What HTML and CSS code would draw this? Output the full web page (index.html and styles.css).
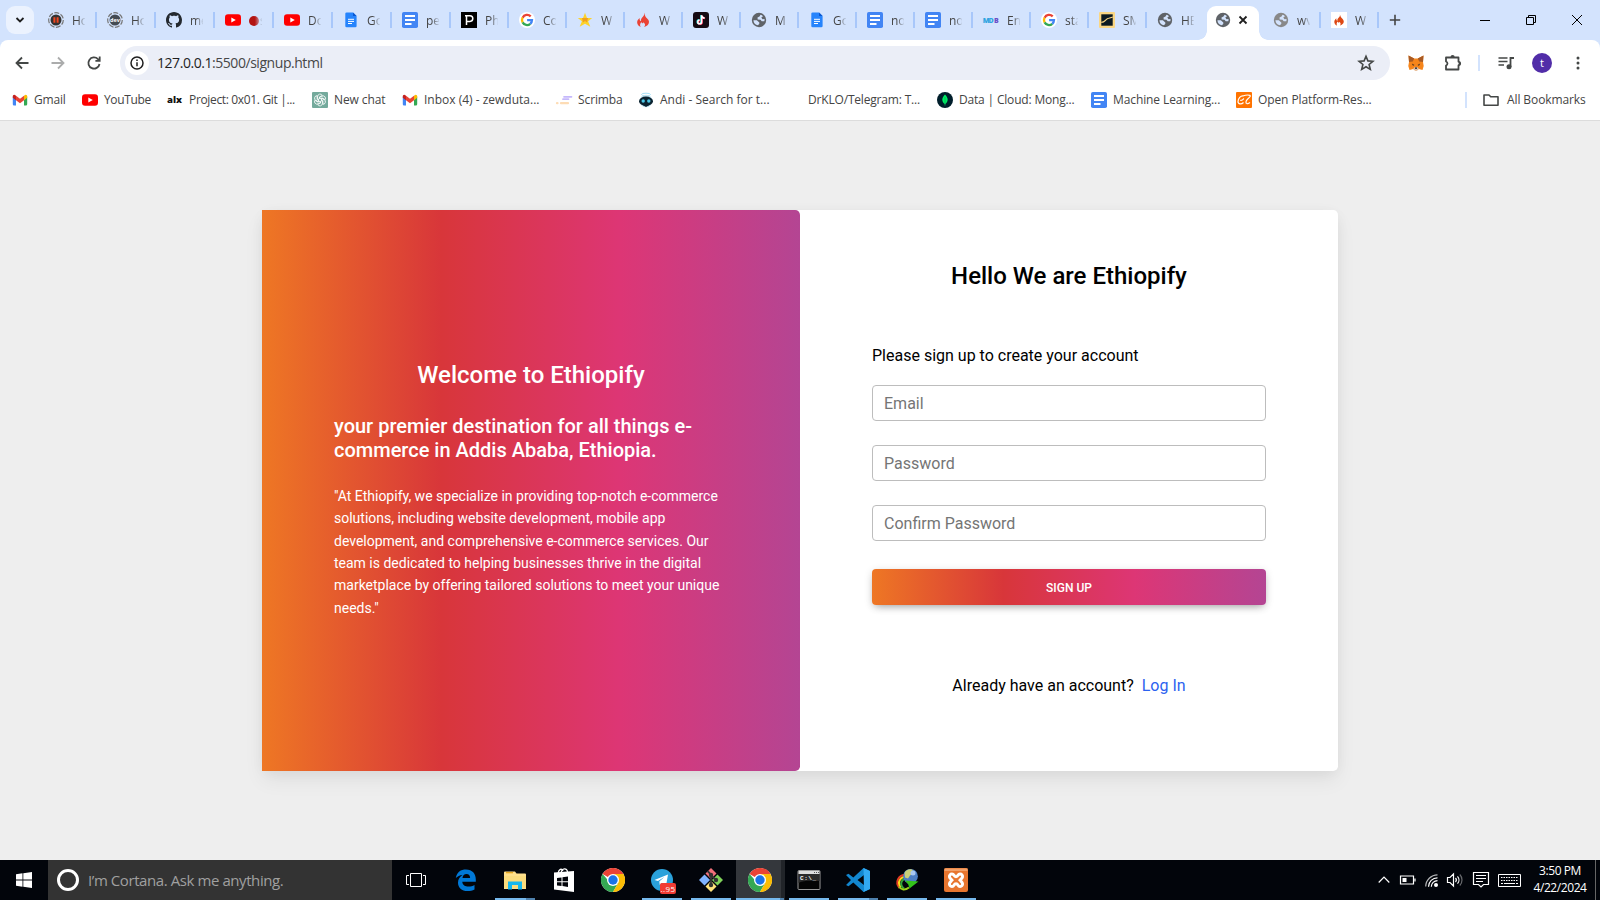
FILE: index.html
```html
<!DOCTYPE html>
<html lang="en">
<head>
<meta charset="utf-8">
<title>Sign up - Ethiopify</title>
<link rel="stylesheet" href="styles.css">
</head>
<body>
<svg class="defs" aria-hidden="true">
  <symbol id="i-youtube" viewBox="0 0 16 16"><rect y="2.2" width="16" height="11.6" rx="3" fill="#f00"/><path d="M6.3 5.4v5.2L10.8 8z" fill="#fff"/></symbol>
  <symbol id="i-docs" viewBox="0 0 16 16"><rect width="16" height="16" rx="1.8" fill="#4285f4"/><path d="M3 4h10M3 8h10M3 12h6.5" stroke="#fff" stroke-width="1.8"/></symbol>
  <symbol id="i-gdoc" viewBox="0 0 16 16"><path d="M3.6.5H10L13.6 4v10a1.3 1.3 0 0 1-1.3 1.3H3.6A1.3 1.3 0 0 1 2.3 14V1.8A1.3 1.3 0 0 1 3.6.5z" fill="#2684fc"/><path d="M10 .5 13.6 4H10z" fill="#0b57d0"/><path d="M5 7.3h6M5 9.4h6M5 11.5h4" stroke="#fff" stroke-width="1"/></symbol>
  <symbol id="i-google" viewBox="0 0 16 16"><circle cx="8" cy="8" r="8" fill="#fff"/><g fill="none" stroke-width="2.3"><path d="M11.7 4.4A5 5 0 0 0 3.6 5.7" stroke="#ea4335"/><path d="M3.6 5.6a5 5 0 0 0 0 4.8" stroke="#fbbc05"/><path d="M3.6 10.4a5 5 0 0 0 7.7 1.4" stroke="#34a853"/><path d="M11.3 11.8A5 5 0 0 0 13 8.1H8.1" stroke="#4285f4"/></g></symbol>
  <symbol id="i-globe" viewBox="0 0 16 16"><circle cx="8" cy="8" r="7.2" fill="currentColor"/><path d="M2.400 8.200H5.800L8.300 10.400V11.800L7 13.200A5.600 5.600 0 0 1 2.400 8.200zM9.500 2.700 8.500 4.500 6.500 5.500 6.700 7.500 9.500 7.700 10.700 9.300 13.300 9.300A5.500 5.500 0 0 0 13.500 7L11.500 7.300 10.300 5.500 12 4.300A5.500 5.500 0 0 0 9.500 2.700z" fill="#d3e3fd"/></symbol>
  <symbol id="i-flame" viewBox="0 0 16 16"><path d="M9 .8c.8 2.300-.6 3.200-1.800 4.800C6 7 5.700 8 6.100 9.200 4.600 8.600 4.500 7.300 4.700 5.900 2.800 7.400 1.900 9 2.200 11c.3 1.900 1.700 3.300 3.500 4C4.500 13.200 5.200 11.300 6.500 10 6.700 11.500 8.300 12 8.400 10.300c2 1.400 2.200 3.300.7 4.700 2.600-.8 4.900-2.500 4.900-5 0-2.800-2.600-3.700-3.700-5.800-.5-1-.6-2.300-1.300-3.400z"/></symbol>
  <symbol id="i-gmail" viewBox="0 0 16 16"><path d="M.8 4.500 4 6.800V13.500H2a1.200 1.200 0 0 1-1.200-1.200z" fill="#4285f4"/><path d="M15.200 4.500 12 6.800V13.500h2a1.200 1.200 0 0 0 1.200-1.200z" fill="#34a853"/><path d="M12 3.800 13 3a1.400 1.400 0 0 1 2.200 1.200V5.800L12 8.200z" fill="#fbbc04"/><path d="M4 3.800 8 6.800 12 3.800V8.200L8 11.200 4 8.200z" fill="#ea4335"/><path d="M4 3.800 3 3A1.400 1.400 0 0 0 .8 4.200V5.800L4 8.200z" fill="#c5221f"/></symbol>
  <symbol id="i-chrome" viewBox="0 0 24 24"><circle cx="12" cy="12" r="12" fill="#fff"/><path d="M12 12 1.600 6A12 12 0 0 1 22.400 6z" fill="#ea4335"/><path d="M1.600 6A12 12 0 0 0 12 24L17.200 15 12 12H6.800z" fill="#34a853"/><path d="M22.400 6A12 12 0 0 1 12 24L17.200 15 17.200 9 12 6z" fill="#fbbc04"/><circle cx="12" cy="12" r="6" fill="#fff"/><circle cx="12" cy="12" r="4.700" fill="#1a73e8"/></symbol>
</svg>

<div class="tabstrip">
  <div class="search-tabs"><svg width="10" height="10" viewBox="0 0 10 10"><path d="M1.500 3 5 6.500 8.500 3" class="ln2"/></svg></div>
  <div class="tabs">
    <div class="tab w59"><svg class="fav" viewBox="0 0 16 16"><circle cx="8" cy="8" r="7.300" fill="none" stroke="#777" stroke-width="1.200" stroke-dasharray="5 1.500"/><circle cx="8" cy="8" r="5.500" fill="#333"/><path d="M5.400 5.200h2v5.600h-2zM8.600 5.200h2v5.600h-2z" fill="#f0461f"/></svg><span>Ho</span></div>
    <div class="tab w59"><svg class="fav" viewBox="0 0 16 16"><circle cx="8" cy="8" r="7.300" fill="none" stroke="#777" stroke-width="1.200" stroke-dasharray="5 1.500"/><circle cx="8" cy="8" r="5.500" fill="#444b52"/><text x="8" y="10" font-size="5.500" text-anchor="middle" class="favtext">dev</text></svg><span>Ho</span></div>
    <div class="tab w59"><svg class="fav" viewBox="0 0 16 16"><path fill="#24292f" d="M8 0C3.580 0 0 3.580 0 8c0 3.540 2.290 6.530 5.470 7.590.4.070.55-.17.55-.38 0-.19-.010-.82-.010-1.490-2.010.37-2.530-.49-2.690-.94-.09-.23-.48-.94-.82-1.130-.28-.15-.68-.52-.010-.53.63-.010 1.080.58 1.230.82.72 1.210 1.870.87 2.330.66.070-.52.28-.87.51-1.070-1.780-.2-3.640-.89-3.640-3.950 0-.87.31-1.590.82-2.150-.08-.2-.36-1.020.08-2.120 0 0 .67-.21 2.200.82.64-.18 1.320-.27 2-.27s1.360.09 2 .27c1.530-1.040 2.200-.82 2.200-.82.44 1.100.16 1.920.08 2.120.51.56.82 1.270.82 2.150 0 3.070-1.870 3.750-3.650 3.950.29.25.54.73.54 1.480 0 1.070-.010 1.930-.010 2.200 0 .21.15.46.55.38A8.010 8.010 0 0 0 16 8c0-4.420-3.580-8-8-8z"/></svg><span>me</span></div>
    <div class="tab w59"><svg class="fav"><use href="#i-youtube"/></svg><span><i class="live"></i>s</span></div>
    <div class="tab w59"><svg class="fav"><use href="#i-youtube"/></svg><span>Do</span></div>
    <div class="tab w59"><svg class="fav"><use href="#i-gdoc"/></svg><span>Go</span></div>
    <div class="tab w59"><svg class="fav"><use href="#i-docs"/></svg><span>pe</span></div>
    <div class="tab"><svg class="fav" viewBox="0 0 16 16"><rect width="16" height="16"/><path d="M5.500 13V3.800M4 3.800h2M6 3.800h3a2.800 2.800 0 0 1 0 5.600H6" fill="none" stroke="#fff" stroke-width="1.500"/></svg><span>Ph</span></div>
    <div class="tab"><svg class="fav"><use href="#i-google"/></svg><span>Co</span></div>
    <div class="tab"><svg class="fav" viewBox="0 0 16 16"><path d="M8 .8 10 6h5.200l-4.100 3.300 2.200 5.500L8 11.700l-5.300 3.100 2.200-5.500L.8 6H6z" fill="#fdd32b"/><path d="M5 6h6l-1 4.500-2-1.500-2 1.500z" fill="#f0a020"/></svg><span>W</span></div>
    <div class="tab"><svg class="fav red"><use href="#i-flame"/></svg><span>W</span></div>
    <div class="tab"><svg class="fav" viewBox="0 0 16 16"><rect width="16" height="16" rx="3" fill="#150a12"/><path d="M8.100 3v6.700a1.900 1.900 0 1 1-1.900-1.900M8.100 3.300c.3 1.500 1.400 2.500 3 2.600" fill="none" stroke="#25f4ee" stroke-width="1.700"/><path d="M9.100 3.500v6.700a1.900 1.900 0 1 1-1.900-1.900M9.100 3.800c.3 1.500 1.400 2.500 3 2.600" fill="none" stroke="#fe2c55" stroke-width="1.700"/><path d="M8.600 3.200v6.700a1.900 1.900 0 1 1-1.900-1.900M8.600 3.500c.3 1.500 1.400 2.500 3 2.600" fill="none" stroke="#fff" stroke-width="1.500"/></svg><span>W</span></div>
    <div class="tab"><svg class="fav"><use href="#i-globe"/></svg><span>M</span></div>
    <div class="tab"><svg class="fav"><use href="#i-gdoc"/></svg><span>Go</span></div>
    <div class="tab"><svg class="fav"><use href="#i-docs"/></svg><span>no</span></div>
    <div class="tab"><svg class="fav"><use href="#i-docs"/></svg><span>no</span></div>
    <div class="tab"><svg class="fav" viewBox="0 0 16 16"><text x="-.3" y="10.500" class="mdb" textLength="11">MD</text><text x="11" y="10.500" class="mdb violet">B</text></svg><span>En</span></div>
    <div class="tab"><svg class="fav"><use href="#i-google"/></svg><span>sta</span></div>
    <div class="tab"><svg class="fav" viewBox="0 0 16 16"><rect width="16" height="16" rx="1" fill="#fbd784"/><rect x="2.300" y="2.300" width="11.400" height="11.400" fill="#0c1a22"/><path d="M2.300 10.400c3.600 0 3.800-2.400 6-3.600C10 5.800 11.500 6.200 13.700 5" fill="none" stroke="#fbd784" stroke-width="1.200"/></svg><span>SM</span></div>
    <div class="tab last"><svg class="fav"><use href="#i-globe"/></svg><span>HE</span></div>
    <div class="tab-active"><svg class="fav"><use href="#i-globe"/></svg><svg class="close" width="10" height="10" viewBox="0 0 10 10"><path d="M1.500 1.500l7 7M8.500 1.500l-7 7" class="ln2"/></svg></div>
    <div class="tab after"><svg class="fav pale"><use href="#i-globe"/></svg><span>wv</span></div>
    <div class="tab"><svg class="fav boxed" viewBox="-2 -2 20 20"><use href="#i-flame" width="16" height="16"/></svg><span>W</span></div>
  </div>
  <svg class="newtab" width="12" height="12" viewBox="0 0 12 12"><path d="M6 .8v10.400M.8 6h10.400" stroke="#444" stroke-width="1.600"/></svg>
  <div class="wincontrols">
    <svg width="12" height="12" viewBox="0 0 12 12"><path d="M1 6.500h10" class="ln1"/></svg>
    <svg width="12" height="12" viewBox="0 0 12 12"><path d="M1.500 3.500h7v7h-7zM3.500 3.500v-2h7v7h-2" class="ln1"/></svg>
    <svg width="12" height="12" viewBox="0 0 12 12"><path d="M1 1l10 10M11 1 1 11" class="ln1"/></svg>
  </div>
</div>

<div class="toolbar">
  <div class="nav">
    <svg width="14" height="14" viewBox="0 0 14 14"><path d="M13.500 7H2M7 1.500 1.500 7 7 12.500" class="ln"/></svg>
    <svg class="off" width="14" height="14" viewBox="0 0 14 14"><path d="M.5 7H12M7 1.500 12.500 7 7 12.500" class="ln"/></svg>
    <svg width="14" height="14" viewBox="0 0 14 14"><path d="M12.500 8A5.600 5.600 0 1 1 11 3.100L12.600 4.600M12.700.6v4.300H8.400" class="ln"/></svg>
  </div>
  <div class="omnibox">
    <div class="info"><svg width="14" height="14" viewBox="0 0 14 14"><circle cx="7" cy="7" r="6" fill="none" stroke="#1f1f1f" stroke-width="1.500"/><path d="M7 6.300v4M7 3.500V5" stroke="#1f1f1f" stroke-width="1.500"/></svg></div>
    <div class="url"><b>127.0.0.1</b>:5500/signup.html</div>
    <svg class="star" width="18" height="18" viewBox="0 0 18 18"><path d="M9 2.300 10.900 6.900 15.900 7.300 12.100 10.500 13.300 15.400 9 12.800 4.700 15.400 5.900 10.500 2.100 7.300 7.100 6.900z" fill="none" stroke="#444746" stroke-width="1.600"/></svg>
  </div>
  <div class="actions">
    <svg class="fox" width="16" height="16" viewBox="0 0 16 16"><path d="M.5.5 6.200 3.500h3.600L15.500.5 15 7l.7 4-1.200 4-3.700-1-1.800 1.500H7L5.200 14l-3.700 1-1.200-4L1 7z" fill="#f6851b"/><path d="M.5.5 6.200 3.500 4.800 6.500 1 7zM15.500.5 9.800 3.500l1.400 3L15 7z" fill="#a85a24"/><path d="M3.800 8.500 6.500 10 5 10.800zM12.200 8.500 9.500 10l1.500.8z" fill="#3b2a20"/><path d="M5.200 13.500 7 12h2l1.800 1.500L9 15.500H7z" fill="#d7c1b3"/><path d="M7 12.500h2v1.200H7z" fill="#161616"/></svg>
    <svg class="ext" width="18" height="18" viewBox="0 0 18 18"><path d="M2 3.500h12.500v4.200a1.900 1.900 0 0 1 0 3.600v4.200H2v-4a2.100 2.100 0 0 0 0-4z" fill="none" stroke="#444746" stroke-width="1.800" stroke-linejoin="round"/><path d="M6.500 3.200a2.100 2.300 0 0 1 4.200 0zM14.800 7.300a2.300 2.200 0 0 1 0 4.400z" fill="#444746"/></svg>
    <i class="vsep"></i>
    <svg class="media" width="16" height="14" viewBox="0 0 16 14"><path d="M.5 2h9M.5 5.500h9M.5 9h5.500" stroke="#444746" stroke-width="1.700"/><path d="M12.500 11V2H16" fill="none" stroke="#444746" stroke-width="1.800"/><circle cx="11" cy="10.800" r="2.500" fill="#444746"/></svg>
    <div class="avatar">t</div>
    <svg width="4" height="14" viewBox="0 0 4 14"><circle cx="2" cy="2" r="1.500"/><circle cx="2" cy="7" r="1.500"/><circle cx="2" cy="12" r="1.500"/></svg>
  </div>
</div>

<div class="bookmarks">
  <div class="bm t2"><svg class="fav"><use href="#i-gmail"/></svg><span>Gmail</span></div>
  <div class="bm t3"><svg class="fav"><use href="#i-youtube"/></svg><span>YouTube</span></div>
  <div class="bm t3"><svg class="fav" viewBox="0 0 16 16"><text x="0" y="11" class="alx" textLength="15" lengthAdjust="spacingAndGlyphs">alx</text></svg><span>Project: 0x01. Git |...</span></div>
  <div class="bm t1"><svg class="fav" viewBox="0 0 16 16"><rect width="16" height="16" rx="1" fill="#74aa9c"/><g fill="none" stroke="#fff" stroke-width=".8"><path id="petal" d="M8 6.300 5.600 7.700V4.600a2.500 2.500 0 0 1 4.700-1.200L7 5.300"/><use href="#petal" transform="rotate(60 8 8)"/><use href="#petal" transform="rotate(120 8 8)"/><use href="#petal" transform="rotate(180 8 8)"/><use href="#petal" transform="rotate(240 8 8)"/><use href="#petal" transform="rotate(300 8 8)"/></g></svg><span>New chat</span></div>
  <div class="bm"><svg class="fav"><use href="#i-gmail"/></svg><span>Inbox (4) - zewduta...</span></div>
  <div class="bm t1"><svg class="fav" viewBox="0 0 16 16"><path d="M8 4.800h7.500M7 7.200h5.500" stroke="#c5b8fb" stroke-width="1.700" stroke-linecap="round"/><path d="M5 11.200h7M1 11.200h.5" stroke="#fddcb5" stroke-width="2.200" stroke-linecap="round"/></svg><span>Scrimba</span></div>
  <div class="bm"><svg class="fav" viewBox="0 0 16 16"><ellipse cx="8" cy="2.500" rx="4.500" ry="1.300" fill="none" stroke="#9ddcf5" stroke-width=".9"/><circle cx="8" cy="9" r="6.300" fill="#bfe3f1"/><ellipse cx="8" cy="9.300" rx="7" ry="4.700" fill="#0b2230"/><path d="M4 12.500h8L8 15z" fill="#0b2230"/><circle cx="5.200" cy="9" r="1.700" fill="#4cc9e8"/><circle cx="10.800" cy="9" r="1.700" fill="#4cc9e8"/></svg><span>Andi - Search for t...</span></div>
  <div class="bm t2"><i class="fav"></i><span>DrKLO/Telegram: T...</span></div>
  <div class="bm t2"><svg class="fav" viewBox="0 0 16 16"><circle cx="8" cy="8" r="8" fill="#001e2b"/><path d="M8 2.500c3.300 3.300 3.800 6.600.3 9.500V13.500h-.6V12C4.200 9.100 4.700 5.800 8 2.500z" fill="#00ed64"/><path d="M8 5v7" stroke="#00a84c" stroke-width=".6"/></svg><span>Data | Cloud: Mong...</span></div>
  <div class="bm t1"><svg class="fav"><use href="#i-docs"/></svg><span>Machine Learning...</span></div>
  <div class="bm t1"><svg class="fav" viewBox="0 0 16 16"><rect width="16" height="16" rx="1" fill="#ff7300"/><path d="M7.500 4C4.500 3.500 2.200 6.500 2 9.500c0 3 3.500 3 5.500 1M4.200 8.300c1.300.4 3-.3 3.500-2M7 4c3-1.200 5.800-1 7-.6.800.5 0 1.600-1.500 2.800-1.800 1.500-2.800 3.800-2.300 5 .6 1 2.300.5 3.800-.7" fill="none" stroke="#fff" stroke-width="1.200"/></svg><span>Open Platform-Res...</span></div>
  <div class="bm all t1"><svg class="fav" viewBox="0 0 16 16"><path d="M1 3h5l1.700 1.700H15V13.300H1z" fill="none" stroke="#444746" stroke-width="1.600" stroke-linejoin="round"/></svg><span>All Bookmarks</span></div>
</div>

<main class="page">
  <section class="card">
    <div class="intro">
      <h1>Welcome to Ethiopify</h1>
      <h2>your premier destination for all things e-commerce in Addis Ababa, Ethiopia.</h2>
      <p>"At Ethiopify, we specialize in providing top-notch e-commerce solutions, including website development, mobile app development, and comprehensive e-commerce services. Our team is dedicated to helping businesses thrive in the digital marketplace by offering tailored solutions to meet your unique needs."</p>
    </div>
    <form class="signup">
      <h1>Hello We are Ethiopify</h1>
      <p>Please sign up to create your account</p>
      <input type="email" placeholder="Email">
      <input type="password" placeholder="Password">
      <input type="password" placeholder="Confirm Password">
      <button type="button">SIGN UP</button>
      <div class="login"><span>Already have an account?</span><a>Log In</a></div>
    </form>
  </section>
</main>

<footer class="taskbar">
  <div class="start"><svg width="16" height="16" viewBox="0 0 16 16"><path d="M0 2.200 6.500 1.300V7.500H0zM7.300 1.200 16 0V7.500H7.300zM0 8.400h6.500v6.300L0 13.800zM7.300 8.400H16V16L7.300 14.800z" fill="#fff"/></svg></div>
  <div class="cortana"><i></i><span>I’m Cortana. Ask me anything.</span></div>
  <div class="view"><svg width="20" height="16" viewBox="0 0 20 16"><path d="M4.500 1.500h11v13h-11zM3 3.500H.5v9H3M17 3.500h2.500v9H17" fill="none" stroke="#fff"/></svg></div>
  <div class="apps">
    <div class="app"><svg width="22" height="24" viewBox="0 0 22 24"><path d="M.8 10C1.800 4 5.700 1.500 11 1.500c6.300 0 9.800 4.300 9.800 9.800v2.400H7.300c.2 3.500 3 4.800 6.200 4.800 2.300 0 4.200-.6 6-1.600v4.600c-2 1-4.300 1.500-7 1.500C6.700 23 3 19.600 3 14.700c0-3.600 1.700-6.200 4.500-7.800C4.700 7.200 2.500 8.200.8 10zM7.500 9.900h7.600c0-2.600-1.300-4-3.600-4S7.800 7.500 7.500 9.900z" fill="#0078d7"/></svg></div>
    <div class="app run multi"><svg width="22" height="19" viewBox="0 0 22 19"><path d="M0 1.500A1 1 0 0 1 1 .5h10l1.500 2H21a1 1 0 0 1 1 1V18H0z" fill="#ffe08c"/><path d="M2 1h7v1.300H2z" fill="#e8a820"/><path d="M0 5h22v12H0z" fill="#fbdc7d"/><path d="M4 18.500v-8h14v8h-4v-4.500H8v4.500z" fill="#16b8f0"/></svg></div>
    <div class="app"><svg width="22" height="24" viewBox="0 0 22 24"><path d="M5 5.500C6 1 8.500 0 10 3M8 5C9 0 14-.5 14.500 4" fill="none" stroke="#fff" stroke-width="1.300"/><path d="M1 4.500 21 3v21L1 21.500z" fill="#fff"/><path d="M4 10l4.500-.5v3.700H4zM9.500 9.300 15 8.500v4.700H9.500zM4 14.200h4.500v3.700L4 17.400zM9.500 14.200H15v4.700l-5.500-.8z" fill="#02040a"/></svg></div>
    <div class="app"><svg width="24" height="24"><use href="#i-chrome"/></svg></div>
    <div class="app run"><svg width="24" height="24" viewBox="0 0 24 24"><circle cx="12" cy="12" r="11" fill="#2aa1da"/><path d="M4.500 12 18 6.500 16 18l-4.200-3-2 2-.5-3.500 5-4.500L8 13z" fill="#fff"/></svg><em>..95</em></div>
    <div class="app run"><svg width="24" height="24" viewBox="0 0 24 24"><path d="M12 0 17.500 5.500 12 11 6.500 5.500z" fill="#f1707a"/><path d="M5.500 6.500 11 12l-5.500 5.500L0 12z" fill="#80b3ff"/><path d="M18.500 6.500 24 12l-5.500 5.500L13 12z" fill="#80d35a"/><path d="M12 13l5.500 5.500L12 24l-5.500-5.500z" fill="#ffe27a"/><path d="M8.500 3 12 6.500V18M12 7.500l5 4.500" fill="none" stroke="#333" stroke-width="1.800"/><g fill="#333"><circle cx="12" cy="7" r="2.200"/><circle cx="12" cy="17" r="2.200"/><circle cx="17" cy="12" r="2.200"/></g></svg></div>
    <div class="app run current"><svg width="24" height="24"><use href="#i-chrome"/></svg></div>
    <div class="app run"><svg width="24" height="20" viewBox="0 0 24 20"><rect x="1" y=".5" width="22" height="19" rx="1" fill="#050505" stroke="#999"/><path d="M1.500 1h21v3h-21z" fill="#ddd"/><path d="M17 2.500h1M19 2.500h1M21 2.500h1" stroke="#555"/><path d="M1.500 4h21v7c-9 0-15-1-21 2z" fill="#2b2b2b"/><text x="3" y="9.500" class="cmd" textLength="16">C:\_</text></svg></div>
    <div class="app run multi"><svg width="24" height="24" viewBox="0 0 24 24"><path d="M17.500 0 24 3v18l-6.500 3L7.300 14.500 2.500 18.200 0 17 5 12 0 7l2.500-1.200L7.300 9.500zM18 7l-6.500 5 6.500 5z" fill="#1287d0" fill-rule="evenodd"/><path d="M17.500 0 24 3v18l-6.500 3 .5-2z" fill="#32a9f2"/></svg></div>
    <div class="app run"><svg width="24" height="24" viewBox="0 0 24 24"><g fill="none" stroke-width="2"><path d="M4.500 20C-.5 14 3.500 7 11 6.500" stroke="#e33a24"/><path d="M6 19.500C1.500 14 5.500 8.500 12 8.500" stroke="#ffd91c"/><path d="M9 20.500C3.500 16 7 10.500 12 10.500" stroke="#33a83a"/><path d="M4 18.500c2 3.500 6 4 10 1" stroke="#9bd11c"/></g><circle cx="15.500" cy="8.300" r="7.400" fill="#4d7fc4"/><path d="M9.500 5c1.500-3.500 5-4.500 8-3.300L18 5l-3 2.500-2 3-3-1z" fill="#c9cf78"/><circle cx="18" cy="5" r="2.500" fill="#a9c8f2"/><path d="M10 12.500 23.500 13.500 14.500 20.500 13.300 16.500z" fill="#33c41b"/></svg></div>
    <div class="app run"><svg width="24" height="24" viewBox="0 0 24 24"><rect width="24" height="24" rx="2" fill="#e8762f"/><path d="M.5.5h23v2.500H.5z" fill="#f2a068"/><path d="M8 6a2.500 2.500 0 0 0-2.500 3c.3 1.500 1.500 2 2.500 3.200-1 1.300-2.200 1.800-2.500 3.300a2.500 2.500 0 0 0 2.500 3c2.500 0 1.500-2.800 4-2.800s1.500 2.800 4 2.800a2.500 2.500 0 0 0 2.500-3c-.3-1.500-1.500-2-2.500-3.300 1-1.200 2.200-1.700 2.500-3.200A2.500 2.500 0 0 0 16 6c-2.500 0-1.500 2.700-4 2.700S10.500 6 8 6z" fill="none" stroke="#fff" stroke-width="3"/></svg></div>
  </div>
  <div class="tray">
    <svg width="12" height="8" viewBox="0 0 12 8"><path d="M.7 6.500 6 1.200 11.300 6.500" class="wl wide"/></svg>
    <svg width="16" height="10" viewBox="0 0 16 10"><path d="M.5 1h13v8H.5zM15 3.500v3" class="wl wide"/><path d="M2.500 3h4v4h-4z" fill="#fff"/></svg>
    <svg width="13" height="13" viewBox="0 0 13 13"><g class="wl wide"><path d="M.7 12.500A12 12 0 0 1 12.500.8" opacity=".7"/><path d="M3.500 12.700A9 9 0 0 1 12.500 3.800"/><path d="M6.300 12.700A6.200 6.200 0 0 1 12.500 6.600"/></g><circle cx="11" cy="11" r="2" fill="#fff"/></svg>
    <svg width="17" height="14" viewBox="0 0 17 14"><path d="M.5 4.500H3L6.500 1v12L3 9.500H.5zM8.500 5a3 3 0 0 1 0 4M10.500 3.300a5.500 5.500 0 0 1 0 7.400" class="wl wide"/><path d="M12.800 1.500a8 8 0 0 1 0 11" class="wl wide" opacity=".4"/></svg>
    <svg width="16" height="16" viewBox="0 0 16 16"><path d="M.5.500h15v12h-5L8 15 5.500 12.500h-5zM3 3.500h10M3 6.500h10M3 9.500h7" class="wl wide"/></svg>
    <svg width="23" height="13" viewBox="0 0 23 13"><path d="M.5.500h22v12H.5z" class="wl"/><path d="M3 3.500h17.500M3 6.500h17.500" class="wl" stroke-dasharray="1.500 1"/><path d="M3 9.500h2M6 9.500h11M18 9.500h2" class="wl"/></svg>
    <div class="clock"><span>3:50 PM</span><span>4/22/2024</span></div>
  </div>
</footer>
</body>
</html>
```
FILE: styles.css
```css
* { box-sizing: border-box; }
body { margin: 0; width: 1600px; height: 900px; overflow: hidden; display: flex; flex-direction: column; font-family: "Open Sans", "Noto Sans", sans-serif; font-size: 12px; color: #444; background: #eee; }
svg { display: block; flex: none; overflow: visible; }
.defs { position: absolute; width: 0; height: 0; }
.fav { width: 16px; height: 16px; flex: none; display: block; }
.ln { fill: none; stroke: #444746; stroke-width: 1.8; }
.ln1 { fill: none; stroke: #000; stroke-width: 1; }
.ln2 { fill: none; stroke: #1f1f1f; stroke-width: 1.8; }
.wl { fill: none; stroke: #fff; stroke-width: 1; }
.wl.wide { stroke-width: 1.2; }

/* Tab strip */
.tabstrip { height: 40px; flex: none; display: flex; align-items: center; background: #d3e3fd; }
.search-tabs { width: 28px; height: 28px; margin-left: 6px; border-radius: 9px; background: #ebf2fe; display: flex; align-items: center; justify-content: center; }
.tabs { display: flex; align-items: center; height: 40px; margin-left: 4px; }
.tab { width: 58px; height: 16px; padding-left: 10px; display: flex; align-items: center; gap: 8px; border-right: 2px solid #a8c7fa; color: #5f6368; }
.tab.w59 { width: 59px; }
.tab span { width: 13px; overflow: hidden; white-space: nowrap; line-height: 18px; padding-top: 1px; color: #444; -webkit-mask-image: linear-gradient(to right, #000 45%, transparent 105%); mask-image: linear-gradient(to right, #000 45%, transparent 105%); }
.tab.last { border-right-color: transparent; width: 60px; }
.tab.after { width: 62px; padding-left: 14px; }
.tab .red { fill: #ea4335; }
.tab .pale { color: #888; }
.tab .boxed { background: #fff; fill: #dd4814; }
.favtext { fill: #fff; font-weight: 700; }
.mdb { font: 800 7px "Open Sans", sans-serif; fill: #2fa5e0; }
.mdb.violet { fill: #6b4fc8; }
.live { display: inline-block; width: 10px; height: 10px; margin-right: 1px; border-radius: 50%; background: #b31412; vertical-align: -1px; }
.tab-active { width: 52px; height: 34px; margin-top: 6px; padding: 0 11px 6px 8px; display: flex; align-items: center; justify-content: space-between; border-radius: 9px 9px 0 0; background: #fff; color: #5f6368; position: relative; }
.tab-active::before, .tab-active::after { content: ""; position: absolute; bottom: 0; width: 9px; height: 9px; }
.tab-active::before { left: -9px; background: radial-gradient(circle at 0 0, transparent 8.5px, #fff 9px); }
.tab-active::after { right: -9px; background: radial-gradient(circle at 100% 0, transparent 8.5px, #fff 9px); }
.newtab { margin-left: 10px; }
.wincontrols { margin-left: auto; margin-right: 17px; display: flex; gap: 34px; }

/* Toolbar */
.toolbar { height: 42px; flex: none; display: flex; align-items: center; padding: 3px 20px 0 15px; background: #fff; border-radius: 8px 8px 0 0; box-shadow: 0 -8px 0 #d3e3fd; clip-path: inset(0); }
.nav { display: flex; gap: 22px; width: 105px; }
.nav .off { opacity: .45; }
.omnibox { width: 1270px; height: 34px; margin-top: 3px; border-radius: 17px; background: #ebeef7; display: flex; align-items: center; padding: 0 15px 0 5px; margin-bottom: 2px; }
.info { width: 24px; height: 24px; border-radius: 50%; background: #fff; display: flex; align-items: center; justify-content: center; }
.url { margin-left: 8px; font-size: 14px; line-height: 20px; letter-spacing: -.45px; color: #474747; }
.url b { font-weight: 400; color: #1f1f1f; }
.star { margin-left: auto; }
.actions { display: flex; align-items: center; margin-left: 18px; flex: 1; fill: #444746; }
.ext { margin-left: 20px; }
.vsep { width: 2px; height: 16px; margin: 0 18px 0 16px; background: #d3e3fd; }
.avatar { width: 20px; height: 20px; margin: 0 24px 0 18px; border-radius: 50%; background: #512da8; color: #fff; text-align: center; line-height: 19px; font-size: 11px; }

/* Bookmarks */
.bookmarks { height: 39px; flex: none; display: grid; grid-template-columns: 70px 85px 145px 90px 154px 82px 148px 151px 154px 145px 229px 1fr; align-items: center; padding: 0 0 2px 12px; background: #fff; border-bottom: 1px solid #dcdcdc; }
.bm { display: flex; align-items: center; gap: 6px; white-space: nowrap; line-height: 18px; }
.t1 { letter-spacing: -.1px; }
.t2 { letter-spacing: -.18px; }
.t3 { letter-spacing: -.34px; }
.bm.all { border-left: 2px solid #d3e3fd; height: 16px; padding-left: 16px; gap: 8px; }
.alx { font: 800 9px "Open Sans", sans-serif; fill: #111; letter-spacing: 0; }

/* Sign-up page */
.page { height: 739px; flex: none; padding: 89px 262px 0; font-family: Roboto, sans-serif; font-size: 16px; line-height: 1.6; color: #000; }
.card { height: 561px; display: grid; grid-template-columns: 1fr 1fr; border-radius: 4.8px; background: #fff; box-shadow: 0 10px 20px 0 rgba(0, 0, 0, .06), 0 2px 15px -3px rgba(0, 0, 0, .07); }
.card h1 { margin: 0; font-size: 24px; line-height: 29px; font-weight: 500; text-align: center; }
.card p { margin: 0; }
.intro { padding: 151px 72px 0; color: #fff; border-radius: 0 4.8px 4.8px 0; background: linear-gradient(to right, #ee7724, #d8363a, #dd3675, #b44593); }
.intro h2 { margin: 24px 0 22.8px; font-size: 20px; line-height: 24px; font-weight: 500; }
.intro p { font-size: 14px; line-height: 22.4px; }
.signup { padding: 52px 72px 0; display: flex; flex-direction: column; }
.signup p { margin: 52px 0 16px; line-height: 26px; }
.signup input { height: 36px; margin-bottom: 24px; padding: 0 11px; border: 1px solid #bdbdbd; border-radius: 4px; font: 16px Roboto, sans-serif; background: #fff; }
.signup input::placeholder { color: #757575; }
.signup button { height: 36px; margin-top: 4px; padding: 2px 0 0; border: 0; border-radius: 4px; color: #fff; font: 500 12px Roboto, sans-serif; background: linear-gradient(to right, #ee7724, #d8363a, #dd3675, #b44593); box-shadow: 0 4px 9px -4px rgba(0, 0, 0, .35), 0 2px 8px rgba(0, 0, 0, .14); }
.login { margin-top: 68px; line-height: 26px; display: flex; justify-content: center; gap: 8px; }
.login a { color: #2b62f0; }

/* Taskbar */
.taskbar { height: 40px; flex: none; display: flex; background: #02050b; color: #fff; }
.taskbar > div, .app { display: flex; align-items: center; }
.start { width: 48px; justify-content: center; }
.cortana { width: 344px; background: #333; padding-left: 9px; gap: 9px; font-size: 15px; letter-spacing: -.42px; color: #a0a0a0; }
.cortana i { width: 22px; height: 22px; border: 3px solid #fff; border-radius: 50%; }
.view { width: 49.5px; justify-content: center; padding-right: 2px; }
.app { width: 49px; height: 40px; justify-content: center; position: relative; }
.app.run::after { content: ""; position: absolute; left: 4.5px; bottom: 0; width: 40px; height: 2px; background: #76b9ed; }
.app.multi::after { background: linear-gradient(to right, #76b9ed 31px, #4f82ae 31px); }
.app.current { background: linear-gradient(to right, #34373c 45px, #212429 45px); }
.app.current::after { left: 0; width: 48px; background: linear-gradient(to right, #76b9ed 44px, #4f82ae 44px); }
.app em { position: absolute; left: 22.5px; top: 23px; width: 16px; height: 11px; border-radius: 2px; background: #f23c34; font: 8px/11px "Open Sans", sans-serif; text-align: center; letter-spacing: .4px; }
.cmd { font: 700 6px "Liberation Mono", monospace; fill: #fff; }
.tray { margin-left: auto; gap: 9px; padding-right: 4px; }
.tray svg:first-child { margin-right: 1px; }
.clock { width: 66px; height: 40px; display: flex; flex-direction: column; align-items: center; justify-content: center; line-height: 17px; letter-spacing: -.42px; border-right: 1px solid #666; padding: 0 5px 2px 0; }
```
